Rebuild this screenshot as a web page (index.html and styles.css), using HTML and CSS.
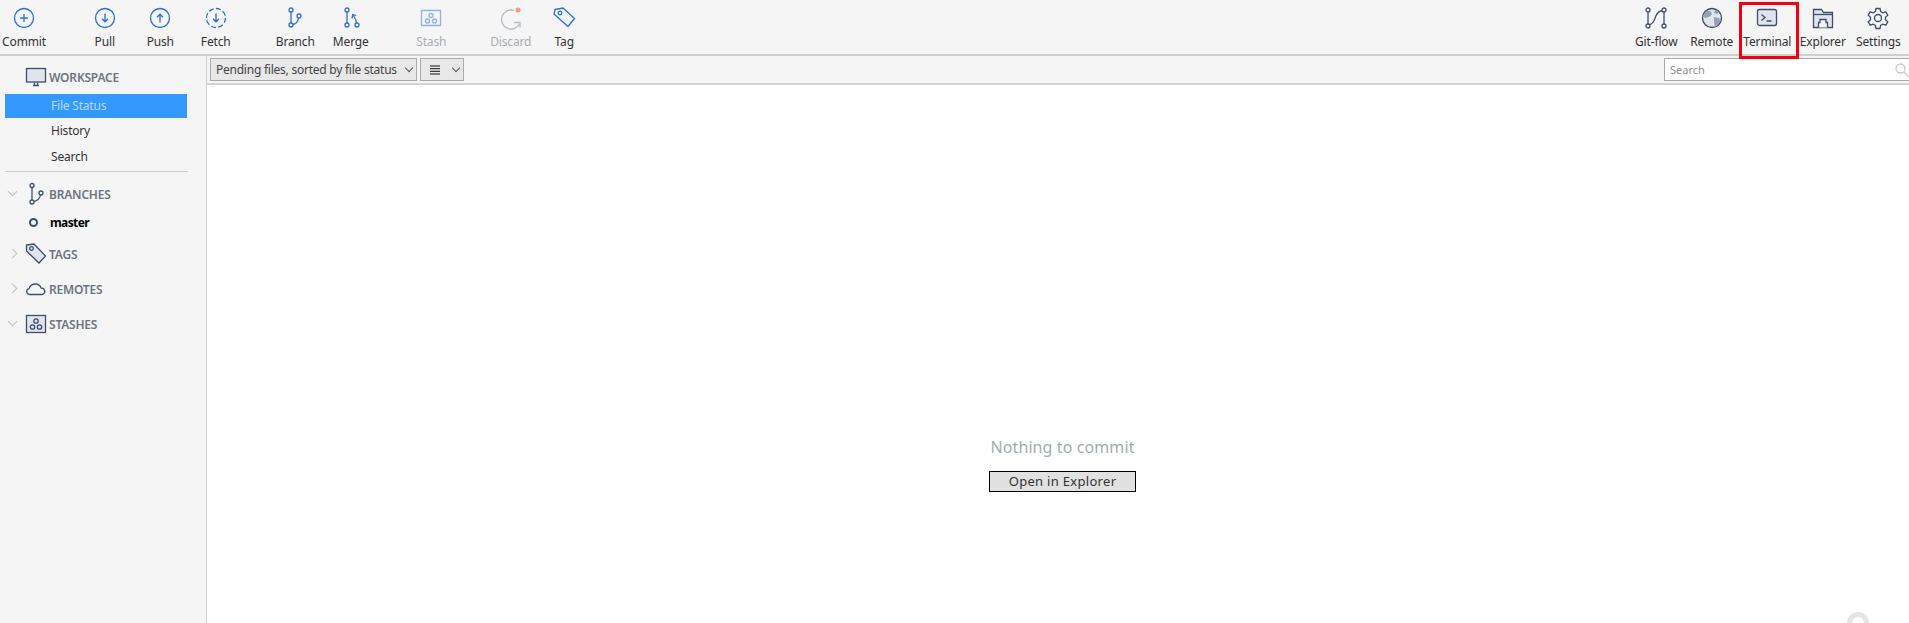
FILE: index.html
```html
<!DOCTYPE html>
<html lang="en">
  <head>
    <meta charset="UTF-8" />
    <title>Sourcetree</title>
    <link rel="stylesheet" href="styles.css">
  </head>
  <body>
    <header class="toolbar">
      <div class="tool tool-commit">
        <svg width="24" height="24" viewBox="0 0 24 24" class="blue"><circle cx="12" cy="12" r="9.5"/><path d="M12 8v8M8 12h8"/></svg>
        <span>Commit</span>
      </div>
      <div class="tool group-start pull">
        <svg width="24" height="24" viewBox="0 0 24 24" class="blue"><circle cx="12" cy="12" r="9.5"/><path d="M12 7.5v8M9 12.8l3 3 3-3"/></svg>
        <span>Pull</span>
      </div>
      <div class="tool">
        <svg width="24" height="24" viewBox="0 0 24 24" class="blue"><circle cx="12" cy="12" r="9.5"/><path d="M12 16.5v-8M9 11.2l3-3 3 3"/></svg>
        <span>Push</span>
      </div>
      <div class="tool">
        <svg width="24" height="24" viewBox="0 0 24 24" class="blue"><circle cx="12" cy="12" r="9.5" stroke-dasharray="5 2.4"/><path d="M12 7.5v8M9 12.8l3 3 3-3"/></svg>
        <span>Fetch</span>
      </div>
      <div class="tool branch">
        <svg width="24" height="24" viewBox="0 0 24 24" class="blue"><circle cx="8" cy="4" r="2"/><circle cx="8" cy="19" r="2"/><circle cx="16" cy="10" r="2"/><path d="M8 6v11M10 18.500c3-.6 5-3.500 5.500-6.600"/></svg>
        <span>Branch</span>
      </div>
      <div class="tool">
        <svg width="24" height="24" viewBox="0 0 24 24" class="blue"><circle cx="8" cy="4" r="2"/><circle cx="8" cy="19" r="2"/><circle cx="18" cy="19" r="2"/><path d="M8 6v11M17.500 17c-.3-3-1.500-5-3-7.500M13 12.500l.8-4 3.400 1"/></svg>
        <span>Merge</span>
      </div>
      <div class="tool stash muted">
        <svg width="24" height="24" viewBox="0 0 24 24" class="faded"><path d="M2.500 4.500h19v15h-19z"/><circle cx="12" cy="9.500" r="2"/><circle cx="8.500" cy="15" r="2"/><circle cx="15.500" cy="15" r="2"/></svg>
        <span>Stash</span>
      </div>
      <div class="tool discard muted">
        <svg width="24" height="24" viewBox="0 0 24 24" class="grey"><path d="M15 4.500A9.500 9.500 0 1 0 20.500 18"/><path d="M15 18.500h6v5" transform="translate(0 -2)"/><circle class="dot" cx="19" cy="4" r="2.500"/></svg>
        <span>Discard</span>
      </div>
      <div class="tool tag">
        <svg width="24" height="24" viewBox="0 0 24 24" class="blue"><path d="M3 3.500l8-1.500 11.500 10.500-6.500 8L2 8z"/><circle cx="8" cy="7" r="1.800"/></svg>
        <span>Tag</span>
      </div>

      <div class="tool git-flow">
        <svg width="24" height="24" viewBox="0 0 24 24" class="slate"><circle cx="4" cy="4" r="2"/><circle cx="4" cy="20" r="2"/><circle cx="20" cy="4" r="2"/><circle cx="20" cy="20" r="2"/><path d="M4 6v12M20 6v12M6 18.500c7-2 3-12 12-14"/></svg>
        <span>Git-flow</span>
      </div>
      <div class="tool">
        <svg width="24" height="24" viewBox="0 0 24 24" class="slate"><circle cx="12" cy="12" r="9.500" class="fill"/><path class="land" d="M7 4.500l4 1 1 3-3 2.500-4 1-2-2zM14 11l5 1 1.500 3-3 4.500-2.500 1.500-1-5zM15 3.500l4 3-2 1.500-3-1z"/></svg>
        <span>Remote</span>
      </div>
      <div class="tool terminal">
        <svg width="24" height="24" viewBox="0 0 24 24" class="slate"><rect x="2.500" y="3.500" width="19" height="16" rx="2" class="fill"/><path d="M6.500 8.500l3.500 3-3.500 3M11.500 15h5"/></svg>
        <span>Terminal</span>
        <div class="highlight"></div>
      </div>
      <div class="tool">
        <svg width="24" height="24" viewBox="0 0 24 24" class="slate"><path class="fill" d="M2.500 3.500h8l2 3h9v15h-19z"/><path d="M2.500 8.500h19"/><path class="notch" d="M7.500 21.500v-5h1.500v-3h6v3h1.500v5"/></svg>
        <span>Explorer</span>
      </div>
      <div class="tool">
        <svg width="24" height="24" viewBox="0 0 24 24" class="slate"><path d="M10 2.500h4l.6 3 2.300 1.300 2.900-1 2 3.400-2.300 2 0 2.600 2.300 2-2 3.400-2.900-1-2.300 1.300-.6 3h-4l-.6-3-2.300-1.300-2.900 1-2-3.400 2.300-2 0-2.600-2.300-2 2-3.400 2.900 1 2.300-1.300z"/><circle cx="12" cy="12" r="3.500"/></svg>
        <span>Settings</span>
      </div>
    </header>

    <div class="layout">
      <aside class="sidebar">
        <div class="head workspace">
          <svg width="22" height="20" viewBox="0 0 22 20" class="slate"><rect x="1.500" y="1.500" width="19" height="13.500" class="fill"/><path d="M8 18.500h6M9.500 15.500v3M12.500 15.500v3"/></svg>
          <span>WORKSPACE</span>
        </div>
        <div class="item active">File Status</div>
        <div class="item">History</div>
        <div class="item">Search</div>
        <div class="divider"></div>

        <div class="head branches">
          <span class="chevron down"></span>
          <svg width="22" height="24" viewBox="0 0 22 24" class="slate"><circle cx="7" cy="3.500" r="2"/><circle cx="7" cy="20" r="2"/><circle cx="16" cy="11" r="2"/><path d="M7 5.500V18M9 19.500c3.500-1 6-3.500 6.500-6.500"/></svg>
          <span>BRANCHES</span>
        </div>
        <div class="branch-row"><span class="ring"></span><span class="name">master</span></div>
        <div class="head tags">
          <span class="chevron right"></span>
          <svg width="22" height="24" viewBox="0 0 22 24" class="slate"><path class="fill" d="M1.500 3l7.500-1 11.500 12-6.500 7L1.500 9z"/><circle cx="6.500" cy="6.500" r="1.800"/></svg>
          <span>TAGS</span>
        </div>
        <div class="head remotes">
          <span class="chevron right"></span>
          <svg width="22" height="20" viewBox="0 0 22 20" class="slate"><path d="M4.500 15.500a3 3 0 0 1-.5-5.900C5 7 7.500 5 10.500 5c2.800 0 4.800 1.700 5.600 4.100a3.300 3.300 0 0 1 1.400 6.400z"/></svg>
          <span>REMOTES</span>
        </div>
        <div class="head stashes">
          <span class="chevron down"></span>
          <svg width="22" height="20" viewBox="0 0 22 20" class="slate"><rect x="1.500" y="1.500" width="19" height="17" class="fill"/><circle cx="11" cy="7" r="2.200"/><circle cx="7.500" cy="13" r="2.200"/><circle cx="14.500" cy="13" r="2.200"/></svg>
          <span>STASHES</span>
        </div>
      </aside>

      <main class="content">
        <div class="filters">
          <div class="select pending">Pending files, sorted by file status<span class="caret"></span></div>
          <div class="select view">
            <svg width="12" height="12" viewBox="0 0 12 12" class="lines"><path d="M1 2h10M1 4.700h10M1 7.300h10M1 10h10"/></svg>
            <span class="caret"></span>
          </div>
          <div class="search">
            <span>Search</span>
            <svg width="14" height="14" viewBox="0 0 14 14" class="lens"><circle cx="5.500" cy="5.500" r="4.500"/><path d="M9 9l4.500 4.500"/></svg>
          </div>
        </div>
        <div class="empty">
          <p>Nothing to commit</p>
          <button>Open in Explorer</button>
        </div>
        <div class="watermark"></div>
      </main>
    </div>
  </body>
</html>
```

FILE: styles.css
```css
* {
  margin: 0;
  padding: 0;
  box-sizing: border-box;
}

html,
body {
  height: 100%;
  overflow: hidden;
}

body {
  font-family: "Noto Sans", Arial, sans-serif;
  font-size: 12px;
  color: #333;
  background: #f5f5f5;
  display: flex;
  flex-direction: column;
}

svg {
  fill: none;
  stroke-width: 1.3;
  display: block;
}

.blue {
  stroke: #2b6fd4;
}

.slate {
  stroke: #3f4d6b;
}

.slate .fill {
  fill: #e1e4ec;
}

.slate .land {
  fill: #98a1b3;
  stroke: none;
}

.slate .notch {
  fill: #f5f5f5;
}

.faded {
  stroke: #8fb2e8;
}

.grey {
  stroke: #b4bac6;
}

.grey .dot {
  fill: #fb9a8e;
  stroke: none;
}

/* Toolbar */
.toolbar {
  height: 56px;
  flex: none;
  display: flex;
  padding-right: 3px;
  border-bottom: 2px solid #d0d0d0;
}

.tool {
  position: relative;
  width: 55.5px;
  flex: none;
  display: flex;
  flex-direction: column;
  align-items: center;
  padding-top: 6px;
  gap: 3px;
  line-height: 17px;
  letter-spacing: -0.15px;
  white-space: nowrap;
}

.tool-commit {
  width: 48px;
}

.pull {
  margin-left: 29px;
}

.branch {
  margin-left: 24px;
}

.stash {
  margin-left: 25px;
}

.discard {
  margin-left: 24px;
}

.tag {
  margin-left: -2px;
}

.muted {
  color: #a9adb4;
}

.git-flow {
  margin-left: auto;
}

.highlight {
  position: absolute;
  top: 2px;
  left: -1px;
  width: 60px;
  height: 57px;
  border: 3px solid #f40012;
  z-index: 2;
}

/* Layout */
.layout {
  flex: 1;
  display: flex;
  min-height: 0;
}

.sidebar {
  width: 207px;
  flex: none;
  padding: 8px 0 0 5px;
  border-right: 1px solid #cfcfcf;
}

.head {
  height: 26px;
  display: flex;
  align-items: center;
  position: relative;
  padding-left: 20px;
  gap: 2px;
  font-weight: 600;
  color: #6e7480;
  letter-spacing: -0.2px;
}

.workspace {
  margin-bottom: 4px;
}

.branches {
  margin-top: 9px;
}

.tags {
  margin-top: 6px;
}

.remotes,
.stashes {
  margin-top: 9px;
}

.chevron {
  position: absolute;
  left: 4px;
  top: 9px;
  width: 7px;
  height: 7px;
  border-right: 1.5px solid #c0c0c0;
  border-bottom: 1.5px solid #c0c0c0;
}

.chevron.down {
  transform: rotate(45deg);
  top: 7px;
}

.chevron.right {
  transform: rotate(-45deg);
}

.item {
  width: 182px;
  height: 26px;
  padding-left: 46px;
  line-height: 26px;
  letter-spacing: -0.2px;
}

.item.active {
  height: 24px;
  line-height: 24px;
  background: #3399ff;
  color: #b9dcff;
}

.divider {
  width: 183px;
  margin-top: 1px;
  border-top: 1px solid #cccccc;
}

.branch-row {
  height: 26px;
  margin-top: 2px;
  display: flex;
  align-items: center;
  padding-left: 24px;
  gap: 12px;
  font-weight: 700;
  color: #000;
}

.branch-row .name {
  letter-spacing: -0.6px;
}

.ring {
  width: 9px;
  height: 9px;
  border: 2px solid #3f4d6b;
  border-radius: 50%;
}

/* Main area */
.content {
  flex: 1;
  position: relative;
  display: flex;
  flex-direction: column;
  overflow: hidden;
}

.filters {
  height: 29px;
  flex: none;
  display: flex;
  gap: 3px;
  padding: 2px 0 0 3px;
  border-bottom: 2px solid #d4d4d4;
}

.select {
  height: 23px;
  display: flex;
  align-items: center;
  background: #e8e8e8;
  border: 1px solid #ababab;
  color: #444;
}

.pending {
  width: 207px;
  padding-left: 5px;
  gap: 9px;
  white-space: nowrap;
  letter-spacing: -0.24px;
}

.view {
  width: 44px;
  padding-left: 8px;
  gap: 12px;
}

.lines {
  stroke: #111;
  stroke-width: 1;
}

.caret {
  width: 6px;
  height: 6px;
  margin-top: -3px;
  border-right: 1px solid #555;
  border-bottom: 1px solid #555;
  transform: rotate(45deg);
}

.search {
  width: 245px;
  height: 23px;
  margin-left: auto;
  display: flex;
  align-items: center;
  justify-content: space-between;
  padding-left: 5px;
  background: #fff;
  border: 1px solid #ababab;
  border-right: none;
  font-size: 11px;
  color: #8d8d8d;
}

.lens {
  stroke: #c9c9c9;
}

.empty {
  flex: 1;
  background: #fff;
  display: flex;
  flex-direction: column;
  align-items: center;
  padding-top: 351px;
  padding-left: 9px;
}

.empty p {
  font-size: 16px;
  line-height: 22px;
  color: #a4abb3;
  letter-spacing: 0.1px;
}

.empty button {
  width: 147px;
  height: 21px;
  margin-top: 13px;
  font-family: inherit;
  font-size: 13px;
  line-height: 17px;
  color: #333;
  background: #e1e1e1;
  border: 1px solid #000;
  letter-spacing: 0.3px;
}

.watermark {
  position: absolute;
  left: 1640px;
  top: 556px;
  width: 22px;
  height: 22px;
  border: 5px solid #e2e4e8;
  border-radius: 50%;
}
```
